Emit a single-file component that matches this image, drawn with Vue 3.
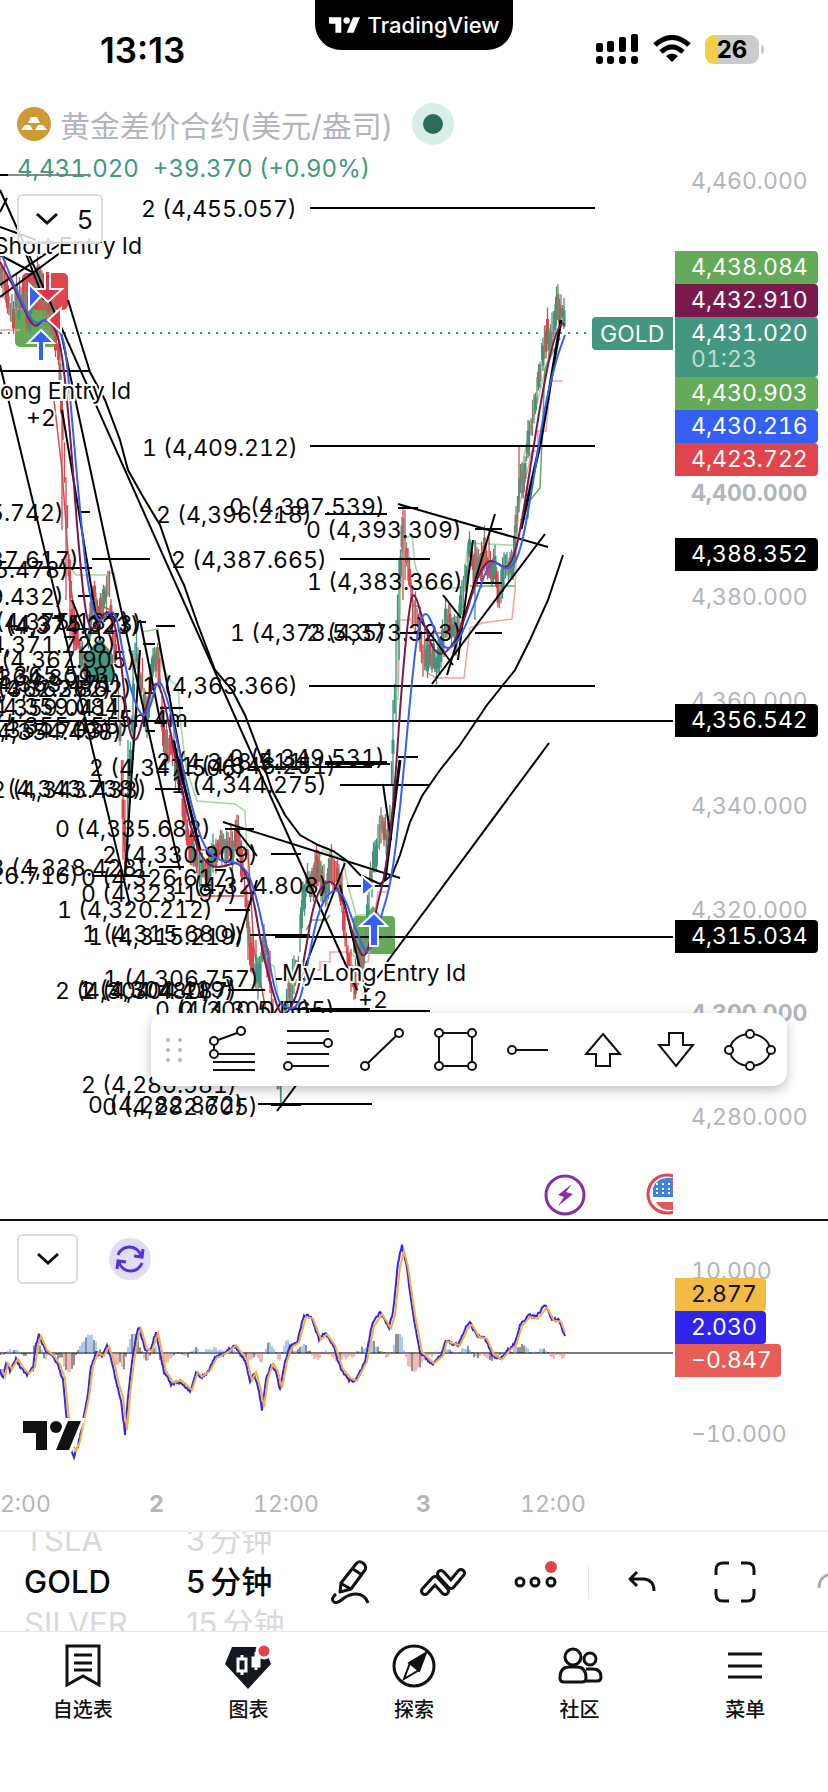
<script setup>
import { ref } from 'vue'

const seeded = (seed) => () => {
  seed = (seed * 1664525 + 1013904223) % 4294967296
  return seed / 4294967296
}
const sample = (pts, x) => {
  for (let i = 1; i < pts.length; i++) {
    if (x <= pts[i][0]) {
      const [x0, y0] = pts[i - 1]
      const [x1, y1] = pts[i]
      return y0 + ((y1 - y0) * (x - x0)) / (x1 - x0)
    }
  }
  return pts[pts.length - 1][1]
}
const line = (pts) => 'M' + pts.map((p) => p.join(' ')).join('L')
const smooth = (pts) => {
  let d = `M${pts[0][0]} ${pts[0][1]}`
  for (let i = 1; i < pts.length - 1; i++) {
    const mx = (pts[i][0] + pts[i + 1][0]) / 2
    const my = (pts[i][1] + pts[i + 1][1]) / 2
    d += `Q${pts[i][0]} ${pts[i][1]} ${mx} ${my}`
  }
  const last = pts[pts.length - 1]
  return d + `L${last[0]} ${last[1]}`
}

/* price series */
const price = [
  [0, 265], [8, 300], [14, 315], [22, 290], [30, 315], [38, 275], [46, 300], [52, 320], [58, 345], [62, 410], [66, 500],
  [70, 595], [74, 635], [80, 650], [86, 655], [91, 600], [94, 580], [99, 610], [106, 590], [110, 578], [114, 650],
  [118, 690], [122, 790], [126, 860], [130, 770], [136, 650], [142, 690], [147, 710], [152, 670], [157, 640], [162, 720],
  [170, 752], [180, 775], [188, 840], [200, 868], [212, 858], [226, 855], [236, 840], [243, 870], [250, 940], [256, 978],
  [264, 945], [272, 1000], [280, 1085], [287, 1000], [298, 975], [303, 900], [312, 880], [324, 878], [334, 875],
  [342, 905], [348, 955], [356, 985], [364, 950], [370, 870], [380, 835], [388, 840], [392, 770], [396, 660], [399, 590],
  [403, 520], [407, 560], [413, 600], [421, 645], [432, 665], [442, 650], [448, 615], [456, 625], [463, 590],
  [469, 550], [475, 575], [483, 545], [491, 570], [499, 585], [507, 560], [514, 550], [518, 490], [524, 470],
  [532, 425], [539, 380], [544, 345], [551, 340], [557, 315], [561, 310], [565, 322]
]
const rnd = seeded(17)
const candle = { red: '', teal: '', mix: '' }
const body = { red: '', teal: '', mix: '' }
let drift = 0
for (let x = 0; x <= 564; x += 1.5) {
  drift = drift * 0.6 + (rnd() - 0.5) * 18
  const y = sample(price, x) + drift
  const slope = sample(price, x + 3) - sample(price, x - 3)
  const r = rnd()
  const kind = r < 0.3 ? 'mix' : slope + (rnd() - 0.5) * 40 > 0 ? 'red' : 'teal'
  const up = 6 + rnd() * 18
  const dn = 6 + rnd() * 18
  candle[kind] += `M${x} ${(y - up).toFixed(1)}V${(y + dn).toFixed(1)}`
  if (rnd() > 0.45) body[kind] += `M${x} ${(y - up * 0.5).toFixed(1)}V${(y + dn * 0.7).toFixed(1)}`
}
candle.red += 'M62 400V530M66 480V600M70 560V640M123 760V860M125 800V880M248 900V960M256 940V990M403 506V600M405 510V580M519 447V500'
candle.teal += 'M128 740V850M133 650V760M281 1050V1108M393 700V800M396 620V720M399 560V660M475 540V620'
const candles = [
  { c: '#d9484c', w: candle.red, b: body.red },
  { c: '#3f957d', w: candle.teal, b: body.teal },
  { c: '#8f7c6c', w: candle.mix, b: body.mix }
]

const fast = smooth([
  [0, 262], [10, 280], [20, 300], [34, 330], [44, 318], [54, 325], [62, 350], [70, 430], [78, 540], [86, 620], [94, 632],
  [104, 612], [112, 612], [120, 650], [128, 730], [136, 745], [144, 715], [154, 680], [162, 690], [172, 740], [182, 790],
  [194, 840], [206, 865], [222, 868], [240, 860], [252, 890], [262, 950], [272, 990], [282, 1020], [296, 1000],
  [304, 960], [314, 900], [326, 880], [336, 884], [346, 910], [356, 945], [366, 962], [376, 910], [386, 870],
  [394, 800], [402, 680], [410, 600], [415, 592], [424, 625], [434, 652], [444, 655], [456, 640], [466, 615],
  [476, 580], [487, 560], [496, 562], [508, 570], [518, 545], [530, 470], [541, 400], [552, 345], [561, 322], [565, 325]
])
const slow = smooth([
  [0, 250], [8, 270], [16, 290], [28, 315], [36, 325], [48, 318], [60, 330], [66, 350], [72, 420], [80, 510], [88, 590],
  [98, 625], [108, 612], [116, 612], [124, 660], [132, 695], [142, 718], [150, 710], [158, 675], [168, 700], [178, 745],
  [190, 800], [204, 850], [222, 862], [240, 862], [252, 880], [264, 930], [276, 1000], [288, 1010], [300, 1005],
  [310, 950], [320, 905], [334, 888], [344, 895], [354, 925], [368, 960], [380, 920], [392, 880], [402, 790],
  [410, 700], [418, 625], [426, 610], [434, 628], [444, 650], [456, 645], [466, 625], [476, 600], [486, 570],
  [494, 560], [508, 572], [520, 555], [532, 490], [544, 410], [556, 360], [565, 335]
])
const trend = line([
  [68, 300], [80, 340], [90, 372], [105, 400], [120, 440], [128, 470], [142, 495], [160, 525], [172, 560], [184, 585],
  [198, 625], [215, 670], [232, 690], [245, 715], [262, 760], [272, 790], [285, 815], [300, 835], [318, 845],
  [333, 851], [346, 860], [360, 875], [380, 884], [392, 875], [400, 855], [410, 822], [422, 796], [440, 770], [460, 745],
  [487, 705], [515, 670], [530, 640], [548, 600], [563, 555]
])

const segments = [
  [310, 208, 595, 208], [0, 175, 8, 175], [0, 371, 90, 371], [310, 446, 595, 446], [78, 512, 90, 512], [92, 559, 150, 559],
  [0, 568, 92, 568], [78, 596, 92, 596], [137, 622, 146, 622], [156, 626, 175, 626], [143, 644, 155, 644],
  [0, 721, 673, 721], [309, 686, 595, 686], [325, 514, 387, 514], [398, 508, 418, 508], [475, 529, 502, 529],
  [340, 559, 430, 559], [475, 583, 502, 583], [475, 633, 502, 633], [400, 633, 430, 633], [398, 757, 418, 757],
  [325, 762, 387, 762], [325, 764, 390, 764], [250, 767, 372, 767], [340, 785, 430, 785], [155, 789, 183, 789],
  [160, 708, 183, 708], [146, 731, 155, 731], [225, 829, 254, 829], [271, 854, 301, 854], [347, 886, 390, 886],
  [92, 876, 150, 876], [159, 867, 184, 867], [225, 910, 250, 910], [250, 935, 310, 935], [275, 937, 673, 937],
  [228, 990, 265, 990], [276, 979, 330, 979], [310, 1011, 430, 1011], [290, 1009, 370, 1009], [258, 1104, 372, 1104],
  [271, 1105, 301, 1105],
  [0, 190, 357, 990], [0, 365, 130, 905], [60, 328, 108, 552], [108, 552, 180, 870], [387, 962, 549, 743], [363, 995, 372, 984],
  [377, 978, 383, 970], [398, 504, 548, 547], [432, 684, 545, 534], [495, 514, 447, 675], [223, 822, 400, 878],
  [235, 828, 257, 856], [443, 595, 461, 618], [418, 617, 453, 665], [125, 875, 140, 650], [345, 863, 300, 980],
  [340, 885, 368, 1002], [277, 1111, 300, 1080], [0, 227, 36, 240], [0, 285, 60, 244], [0, 297, 64, 250],
  [0, 212, 7, 198], [26, 254, 44, 300], [0, 255, 32, 272], [62, 410, 100, 640], [140, 620, 160, 720], [157, 630, 185, 780],
  [237, 945, 257, 880], [383, 784, 391, 840], [72, 600, 92, 650], [473, 540, 458, 660]
]
const bold = [[521, 529, 541, 440], [541, 440, 561, 320], [173, 740, 200, 850], [385, 880, 400, 760]]

const labels = [
  [141, 217, '2 (4,455.057)'], [142, 456, '1 (4,409.212)'], [-92, 521, '1 (4,395.742)'], [156, 523, '2 (4,396.218)'],
  [229, 515, '0 (4,397.539)'], [306, 538, '0 (4,393.309)'], [171, 568, '2 (4,387.665)'], [-77, 568, '0 (4,387.617)'],
  [-87, 578, '1 (4,385.478)'], [307, 590, '1 (4,383.366)'], [-92, 605, '0 (4,379.432)'], [-14, 632, '0 (4,375.323)'],
  [-16, 634, '1 (4,374.223)'], [-26, 630, '2 (4,375.187)'], [-40, 653, '1 (4,371.728)'], [230, 641, '1 (4,373.535)'],
  [306, 641, '2 (4,373.323)'], [-20, 668, '1 (4,367.905)'], [-38, 683, '0 (4,365.513)'], [-54, 686, '1 (4,364.809)'],
  [-24, 697, '2 (4,362.862)'], [-34, 692, '0 (4,363.471)'], [-44, 697, '1 (4,362.362)'], [142, 694, '1 (4,363.366)'],
  [-27, 715, '1 (4,359.084)'], [-38, 716, '2 (4,359.041)'], [-27, 734, '2 (4,355.455)'], [-34, 740, '1 (4,354.498)'],
  [-45, 738, '0 (4,354.703)'], [89, 776, '2 (4,347.506)'], [156, 770, '2 (4,348.511)'], [229, 766, '0 (4,349.531)'],
  [180, 774, '1 (4,346.251)'], [171, 793, '1 (4,344.275)'], [-14, 797, '1 (4,343.738)'], [-9, 798, '2 (4,343.433)'],
  [55, 837, '0 (4,335.682)'], [102, 863, '2 (4,330.909)'], [-10, 876, '3 (4,328.428)'], [-77, 884, '1 (4,326.716)'],
  [81, 886, '0 (4,326.617)'], [172, 894, '1 (4,324.808)'], [81, 902, '0 (4,323.197)'], [57, 918, '1 (4,320.212)'],
  [82, 942, '1 (4,315.680)'], [88, 945, '1 (4,315.219)'], [103, 987, '1 (4,306.757)'], [55, 999, '2 (4,304.480)'],
  [81, 999, '2 (4,304.287)'], [78, 998, '1 (4,304.419)'], [155, 1018, '0 (4,300.545)'], [179, 1018, '0 (4,300.565)'],
  [81, 1093, '2 (4,286.581)'], [88, 1113, '0 (4,282.872)'], [102, 1115, '0 (4,282.605)']
]
const ticks = [
  [189, '4,460.000'], [501, '4,400.000', true], [605, '4,380.000'], [709, '4,360.000'], [814, '4,340.000'],
  [918, '4,320.000'], [1021, '4,300.000', true], [1125, '4,280.000']
]
const tags = [
  [251, '#63ab58', '4,438.084'], [284, '#7a1a4c', '4,432.910'], [317, '#43967f', '4,431.020', '01:23'],
  [377, '#63ab58', '4,430.903'], [410, '#355ff6', '4,430.216'], [443, '#e0454c', '4,423.722'],
  [538, '#000', '4,388.352'], [704, '#000', '4,356.542'], [920, '#000', '4,315.034']
]

/* oscillator */
const macd = [
  [0, 1370], [3, 1378], [6, 1364], [10, 1370], [16, 1359], [21, 1368], [27, 1375], [33, 1368], [36, 1345], [39, 1335],
  [45, 1350], [52, 1356], [58, 1365], [63, 1380], [66, 1412], [70, 1448], [74, 1456], [78, 1446], [83, 1420], [87, 1400], [91, 1367],
  [96, 1353], [102, 1356], [107, 1346], [112, 1362], [117, 1386], [121, 1400], [125, 1434], [128, 1398], [132, 1362],
  [137, 1332], [139, 1327], [145, 1349], [150, 1351], [156, 1332], [160, 1352], [164, 1372], [171, 1384], [180, 1382],
  [190, 1392], [196, 1373], [200, 1378], [208, 1372], [215, 1358], [225, 1353], [234, 1345], [245, 1360], [250, 1382],
  [254, 1373], [259, 1392], [262, 1410], [266, 1380], [271, 1364], [276, 1372], [280, 1390], [285, 1362], [290, 1347],
  [297, 1342], [304, 1315], [311, 1317], [319, 1339], [325, 1333], [333, 1345], [341, 1370], [349, 1380], [355, 1382],
  [365, 1362], [372, 1325], [380, 1312], [389, 1327], [393, 1313], [398, 1262], [402, 1246], [406, 1262], [413, 1313],
  [420, 1352], [432, 1364], [441, 1356], [445, 1341], [458, 1345], [466, 1327], [470, 1323], [477, 1336], [485, 1338],
  [492, 1355], [500, 1360], [508, 1350], [514, 1345], [520, 1325], [528, 1315], [536, 1317], [545, 1305], [552, 1319],
  [559, 1320], [565, 1337]
]
const noise = seeded(5)
const main = []
const signal = []
const bars = { up: '', down: '', dark: '' }
for (let x = 0; x <= 565; x += 1) {
  main.push([x, +(sample(macd, x) + (noise() - 0.5) * 3).toFixed(1)])
  if (x > 1) signal.push([x, +(1352 + (sample(macd, x - 2) - 1352) * 0.95).toFixed(1)])
  if (x % 2 === 0) {
    const h = (sample(macd, x + 1) - sample(macd, Math.max(0, x - 7))) * 0.34 + (noise() - 0.5) * 5
    const k = noise() < 0.35 ? 'dark' : h < 0 ? 'up' : 'down'
    const y = 1353 + Math.max(-19, Math.min(19, h))
    bars[k] += `M${x} 1353V${y.toFixed(1)}`
  }
}
const oscTags = [
  [1278, 91, '#f3bb44', '2.877', '#111'], [1311, 91, '#2f25ef', '2.030', '#fff'], [1344, 106, '#e85e57', '−0.847', '#fff']
]
const times = [[-15, '12:00'], [149, '2', true], [253, '12:00'], [416, '3', true], [520, '12:00']]

const active = ref('chart')
const tabs = [
  { id: 'watch', name: '自选表' }, { id: 'chart', name: '图表' }, { id: 'explore', name: '探索' },
  { id: 'community', name: '社区' }, { id: 'menu', name: '菜单' }
]
</script>

<template>
  <div class="app">
    <header class="status">
      <time class="clock">13:13</time>
      <div class="island">
        <svg width="31" height="16" viewBox="0 0 58 29" fill="#fff"><path d="M0 0h23v29H12V12H0z" /><circle cx="33" cy="6" r="6" /><path d="M45 0h13L46 29H33z" /></svg>
        <span>TradingView</span>
      </div>
      <div class="signals">
        <svg width="43" height="30" viewBox="0 0 43 30">
          <rect x="0" y="9" width="7" height="9" rx="2" /><rect x="11" y="7" width="7" height="11" rx="2" />
          <rect x="23" y="3" width="7" height="15" rx="2" /><rect x="35" y="0" width="7" height="18" rx="2" />
          <rect x="0" y="22" width="7" height="8" rx="3" /><rect x="11" y="22" width="7" height="8" rx="3" />
          <rect x="23" y="22" width="7" height="8" rx="3" /><rect x="35" y="22" width="7" height="8" rx="3" />
        </svg>
        <svg width="38" height="28" viewBox="0 0 38 28" fill="none" stroke="#000" stroke-width="5">
          <path d="M2 10Q19-5 36 10M8 17Q19 7 30 17" /><path d="M19 27l-6-6q6-5 12 0z" fill="#000" stroke="none" />
        </svg>
        <div class="battery"><b>26</b></div>
      </div>
    </header>

    <section class="pane">
      <svg class="plot" viewBox="0 90 828 1129">
        <defs><clipPath id="plot-area"><rect x="0" y="90" width="673" height="1129" /></clipPath></defs>
        <g clip-path="url(#plot-area)">
          <path d="M0 333H592" stroke="#43967f" stroke-width="2" stroke-dasharray="2 6" />
          <path d="M8 175H90" stroke="#888" stroke-width="2" />
          <rect x="22" y="273" width="46" height="37" rx="5" fill="#e0454c" />
          <rect x="15" y="310" width="42" height="37" rx="5" fill="#63ab58" />
          <path d="M357 916h8l8-10 8 10h10q4 0 4 4v30q0 4-4 4h-34q-4 0-4-4v-30q0-4 4-4z" fill="#63ab58" />
          <g fill="none" stroke-width="1.5">
            <path stroke="#a5d6a0" d="M72 570l4 5h32v-2h6l4 20M142 632l16-3 4 38 5 8 3 5 8 6 3 40 5 40 6 20 5 15 38 3 10 7 3 60 8 40 8 50 10 5 8 60M303 890l20-40 20 10 5 25 8 30h20M398 700l4-160 10-5 3 30 6 18 2 5h40l5-45 40 2h8l2-40 6-50 20-80 10-40" />
            <path stroke="#63ab58" d="M306 930l6-10h14l4-5M470 586h45M520 520l8-2v-15l12-15 5-120 15-30" />
            <path stroke="#e0454c" d="M54 400l8 70 8 110 8 60 8 40M196 850h52l6 100 12 60M200 896h44M100 605l10 5" />
            <path stroke="#f2a0a4" d="M0 330h20M300 970h20v-8h10v-10h20l10 10h8l10-70h10l5-25M398 690v-70h12v-2l8 20 10 35 8 5h28l6-50 12-5 30-4 3-28 3-80 14-60h6v-20h8l5-50h12" />
            <path stroke="#e0454c" d="M412 605l8 2v27M434 633h24l6-20" />
          </g>
          <g v-for="k in candles" :key="k.c" :stroke="k.c" fill="none">
            <path :d="k.w" stroke-width="1.3" />
            <path :d="k.b" stroke-width="3" />
          </g>
          <path d="M85 682V655l15-17 13 17v27z" fill="#43967f" />
          <g stroke="#000" stroke-width="2">
            <line v-for="(s, i) in segments" :key="i" :x1="s[0]" :y1="s[1]" :x2="s[2]" :y2="s[3]" />
            <path :d="trend" fill="none" />
          </g>
          <g stroke="#000" stroke-width="3">
            <line v-for="(s, i) in bold" :key="i" :x1="s[0]" :y1="s[1]" :x2="s[2]" :y2="s[3]" />
          </g>
          <g class="level">
            <text v-for="l in labels" :key="l[2] + l[0]" :x="l[0]" :y="l[1]">{{ l[2] }}</text>
            <text x="188" y="727" text-anchor="end">5h 4m</text>
          </g>
          <path :d="fast" fill="none" stroke="#7a1a4c" stroke-width="2" />
          <path :d="slow" fill="none" stroke="#355ff6" stroke-width="2" />
          <g stroke="#fff" stroke-width="2">
            <path d="M29 284l12 12-12 13z" fill="#355ff6" />
            <path d="M45 271h5v18h12l-14 13-14-13h11z" fill="#e0344c" />
            <path d="M61 308v24l-13-12z" fill="#e0344c" />
            <path d="M38 361v-18H28l13-13 13 13H44v18z" fill="#355ff6" />
            <path d="M370 946v-20h-10l14-13 13 13h-9v20z" fill="#355ff6" />
            <path d="M362 876l12 10-12 10z" fill="#355ff6" />
          </g>
          <g class="level halo">
            <text x="142" y="254" text-anchor="end">My Short Entry Id</text>
            <text x="131" y="399" text-anchor="end">My Long Entry Id</text>
            <text x="26" y="426">+2</text>
            <text x="282" y="981">My Long Entry Id</text>
            <text x="358" y="1008">+2</text>
          </g>
          <path d="M596 317h77v33h-77q-4 0-4-4v-25q0-4 4-4z" fill="#43967f" />
          <text class="level on name" x="600" y="342">GOLD</text>
          <g>
            <circle cx="565" cy="1195" r="19" fill="#fff" stroke="#8430a4" stroke-width="3" />
            <path d="M572 1184l-14 11 6 2-6 9 15-12-7-2z" fill="#8430a4" />
            <circle cx="667" cy="1194" r="19" fill="#fff" stroke="#e0454c" stroke-width="3" />
            <path d="M653 1197V1188q4-10 14-10h8v19z" fill="#3f82dc" />
            <path d="M656 1202h20v8h-8q-8-1-12-8zM671 1180h4v5h-4zM671 1190h4v4h-4z" fill="#e05a58" />
            <path d="M656 1184h16M656 1189h16M656 1193h16" stroke="#fff" stroke-width="2" stroke-dasharray="2 4" />
          </g>
        </g>
        <g class="axis">
          <text v-for="t in ticks" :key="t[0]" x="691" :y="t[0]" :class="{ strong: t[2] }">{{ t[1] }}</text>
        </g>
        <g v-for="t in tags" :key="t[0]">
          <path :d="`M675 ${t[0]}h139q4 0 4 4v${t[3] ? 52 : 25}q0 4-4 4h-139z`" :fill="t[1]" />
          <text class="figure on" x="691" :y="t[0] + 24">{{ t[2] }}</text>
          <text v-if="t[3]" class="figure dim" x="691" :y="t[0] + 50">{{ t[3] }}</text>
        </g>
      </svg>

      <div class="legend">
        <h1>
          <svg width="34" height="34" viewBox="0 0 34 34"><circle cx="17" cy="17" r="17" fill="#cd9a34" /><g fill="#fff"><path d="M14 10h6l3 6H11zM8 18h5l3 5H4zM21 18h5l4 5H18z" /></g></svg>
          <span>黄金差价合约(美元/盎司)</span>
          <i class="market"></i>
        </h1>
        <p><span>4,431.020</span><span>+39.370 (+0.90%)</span></p>
        <button class="fold" aria-label="指标">
          <svg width="24" height="14" viewBox="0 0 24 14" fill="none" stroke="#111" stroke-width="3"><path d="M2 2l10 9 10-9" /></svg>5
        </button>
      </div>

      <div class="tools" role="toolbar">
        <svg class="grip" width="18" height="26" viewBox="0 0 18 26" fill="#b5b5b5"><circle v-for="n in 6" :key="n" :cx="n % 2 ? 3 : 15" :cy="3 + Math.floor((n - 1) / 2) * 10" r="2" /></svg>
        <button aria-label="通道"><svg viewBox="0 0 48 48"><path d="M8 14l19-7M4 19v5M8 28h37M3 36h42M3 44h42" /><circle cx="31" cy="5" r="4" /><circle cx="4" cy="15" r="4" /><circle cx="4" cy="28" r="4" /></svg></button>
        <button aria-label="斐波那契"><svg viewBox="0 0 48 48"><path d="M3 5h42M3 17h37M3 28h42M7 40h38" /><circle cx="44" cy="17" r="4" /><circle cx="4" cy="40" r="4" /></svg></button>
        <button aria-label="趋势线"><svg viewBox="0 0 48 48"><path d="M10 37L38 10" /><circle cx="7" cy="40" r="4" /><circle cx="41" cy="7" r="4" /></svg></button>
        <button aria-label="矩形"><svg viewBox="0 0 48 48"><path d="M8 7h33v33H8z" /><circle cx="8" cy="7" r="4" /><circle cx="41" cy="7" r="4" /><circle cx="8" cy="40" r="4" /><circle cx="41" cy="40" r="4" /></svg></button>
        <button aria-label="水平射线"><svg viewBox="0 0 48 48"><path d="M11 24h32" /><circle cx="7" cy="24" r="4" /></svg></button>
        <button aria-label="向上箭头"><svg viewBox="0 0 48 48"><path d="M24 8l17 20H31v12H17V28H7z" /></svg></button>
        <button aria-label="向下箭头"><svg viewBox="0 0 48 48"><path d="M24 40l17-21H31V7H17v12H7z" /></svg></button>
        <button aria-label="椭圆"><svg viewBox="0 0 48 48"><ellipse cx="24" cy="24" rx="20" ry="16" /><circle cx="3" cy="24" r="4" /><circle cx="45" cy="24" r="4" /><circle cx="24" cy="8" r="4" /><circle cx="24" cy="40" r="4" /></svg></button>
      </div>
    </section>

    <section class="pane lower">
      <svg class="plot" viewBox="0 1221 828 309">
        <path d="M0 1353H673" stroke="#777" stroke-width="2" />
        <path :d="bars.up" stroke="#5b93e8" stroke-width="1" />
        <path :d="bars.down" stroke="#e8706c" stroke-width="1" />
        <path :d="bars.dark" stroke="#222" stroke-width="1" />
        <path :d="line(main)" fill="none" stroke="#2f25ef" stroke-width="2" />
        <path :d="line(signal)" fill="none" stroke="#f3b13c" stroke-width="2" />
        <g stroke="#fff" stroke-width="6" paint-order="stroke" fill="#111">
          <path d="M23 1421h24v29H36v-17H23z" /><circle cx="56" cy="1427" r="6" /><path d="M68 1421h13l-12 29H56z" />
        </g>
        <g class="axis">
          <text x="691" y="1279">10.000</text>
          <text x="691" y="1442">−10.000</text>
          <text v-for="t in times" :key="t[0]" :x="t[0]" y="1512" :class="{ strong: t[2] }">{{ t[1] }}</text>
        </g>
        <g v-for="t in oscTags" :key="t[0]">
          <path :d="`M675 ${t[0]}h${t[1] - 4}q4 0 4 4v25q0 4-4 4h-${t[1] - 4}z`" :fill="t[2]" />
          <text class="figure" x="691" :y="t[0] + 24" :style="{ fill: t[4] }">{{ t[3] }}</text>
        </g>
      </svg>
      <div class="lower-legend">
        <button class="fold square" aria-label="展开">
          <svg width="24" height="14" viewBox="0 0 24 14" fill="none" stroke="#111" stroke-width="3"><path d="M2 2l10 9 10-9" /></svg>
        </button>
        <button class="sync" aria-label="刷新">
          <svg width="32" height="32" viewBox="0 0 32 32" fill="none" stroke="#5a2fe0" stroke-width="3"><path d="M4 12a12 12 0 0 1 23 1M28 20a12 12 0 0 1-23-1M29 6l-1 8-8-1M3 26l1-8 8 1" /></svg>
        </button>
      </div>
    </section>

    <div class="controls">
      <div class="wheel symbol"><span>TSLA</span><button>GOLD</button><span>SILVER</span></div>
      <div class="wheel interval"><span>3<i>分钟</i></span><button>5<i>分钟</i></button><span>15<i>分钟</i></span></div>
      <button class="act" aria-label="绘图">
        <svg width="40" height="44" viewBox="0 0 40 44"><path d="M11 23L26 4q3-4 7-1t2 7L21 29l-11 3zM12 24l9 5M23 9l9 6" /><path d="M6 34q-6 5-2 8 3 2 10-4 9-6 17-3 5 2 7 8" /></svg>
      </button>
      <button class="act" aria-label="指标">
        <svg width="46" height="34" viewBox="0 0 46 34" stroke-linecap="round">
          <path d="M21 9l10 11L41 8" class="outer" /><path d="M21 9l10 11L41 8" class="inner" />
          <path d="M5 26l10-11 10 11" class="outer" /><path d="M5 26l10-11 10 11" class="inner" />
        </svg>
      </button>
      <button class="act" aria-label="更多">
        <svg width="46" height="44" viewBox="0 0 46 44"><circle cx="7" cy="22" r="4" /><circle cx="22" cy="22" r="4" /><circle cx="38" cy="22" r="4" /><circle cx="38" cy="7" r="6" fill="#e0454c" stroke="none" /></svg>
      </button>
      <i class="rule"></i>
      <button class="act" aria-label="撤销">
        <svg width="30" height="24" viewBox="0 0 30 24"><path d="M10 2L3 9l7 7M4 9h13q10 1 10 12" /></svg>
      </button>
      <button class="act" aria-label="全屏">
        <svg width="42" height="42" viewBox="0 0 42 42"><path d="M2 14V9q0-7 7-7h6M27 2h6q7 0 7 7v5M40 28v5q0 7-7 7h-6M15 40H9q-7 0-7-7v-5" /></svg>
      </button>
      <button class="act" aria-label="快照">
        <svg width="22" height="24" viewBox="0 0 22 24" class="faint"><path d="M2 18Q2 6 14 4" /></svg>
      </button>
    </div>

    <nav class="tabs">
      <a v-for="t in tabs" :key="t.id" href="#" :aria-current="active === t.id ? 'page' : null" @click.prevent="active = t.id">
        <svg viewBox="0 0 48 48" width="48" height="48">
          <g v-if="t.id === 'watch'"><path d="M8 4h32v39l-16-9-16 9zM15 13h18M15 21h18M15 28h18" /></g>
          <g v-else-if="t.id === 'chart'"><path d="M8 5h32l7 17-23 25L1 22z" fill="#131722" stroke="none" /><path d="M18 13v20M32 10v18" stroke="#fff" /><path d="M14 17h8v12h-8z" fill="#131722" stroke="#fff" /><path d="M29 16h6v8h-6z" fill="#fff" stroke="#fff" /><circle cx="40" cy="9" r="7" fill="#e0454c" stroke="#fff" stroke-width="3" /></g>
          <g v-else-if="t.id === 'explore'"><circle cx="24" cy="24" r="20" /><path d="M35 12l-6 16-15 9 6-16z" stroke-width="2" /><path d="M35 12l-6 16-9-7z" fill="#111" /></g>
          <g v-else-if="t.id === 'community'"><circle cx="17" cy="15" r="8" /><circle cx="34" cy="17" r="6" /><path d="M4 36q0-11 9-11h8q9 0 9 11 0 4-4 4H8q-4 0-4-4zM30 27h7q8 0 8 8 0 4-4 4H29" /></g>
          <g v-else><path d="M7 12h34M7 24h34M7 35h34" /></g>
        </svg>
        <span>{{ t.name }}</span>
      </a>
    </nav>
  </div>
</template>

<style>
body { margin: 0; background: #fff; }
</style>

<style scoped>
.app { font-family: Inter, "Noto Sans CJK SC", sans-serif; color: #111; background: #fff; overflow: hidden; }
button { font: inherit; color: inherit; border: 0; background: none; padding: 0; margin: 0; }
.status { height: 90px; display: grid; grid-template-columns: 1fr auto 1fr; align-items: start; }
.clock { padding: 30px 0 0 100px; font-size: 35px; line-height: 40px; font-weight: 600; color: #000; }
.island { display: flex; align-items: center; gap: 8px; height: 50px; padding: 0 14px; box-sizing: border-box; background: #000; color: #fff; border-radius: 0 0 26px 26px; font-size: 22px; font-weight: 500; }
.signals { display: flex; align-items: center; gap: 14px; justify-content: flex-end; padding: 34px 69px 0 0; }
.battery { position: relative; width: 54px; height: 29px; border-radius: 9px; background: linear-gradient(90deg, #f6cd46 25%, #cbcbcb 25%); text-align: center; font-size: 24px; line-height: 29px; color: #000; }
.battery::after { content: ""; position: absolute; right: -5px; top: 10px; width: 3px; height: 9px; border-radius: 0 4px 4px 0; background: #cbcbcb; }
.battery b { font-weight: 700; }
.pane { position: relative; }
.lower { border-top: 2px solid #111; }
.plot { display: block; width: 100%; height: auto; font-family: Inter, sans-serif; font-size: 23px; font-variant-numeric: tabular-nums; }
.level { fill: #0a0a0a; }
.halo { stroke: #fff; stroke-width: 4px; paint-order: stroke; }
.on { fill: #fff; }
.dim { fill: #b9ddd2; }
.axis { fill: #b2b5bb; }
.strong { font-weight: 700; }
.legend { position: absolute; left: 17px; top: 13px; }
h1 { display: flex; align-items: center; gap: 9px; height: 42px; margin: 0; font-size: 30px; font-weight: 400; color: #b2b5be; }
.market { width: 20px; height: 20px; margin-left: 10px; border: 11px solid #d9ede9; border-radius: 50%; background: #2d6b58; }
.legend p { display: flex; gap: 14px; margin: 8px 0 9px; font-size: 24px; line-height: 32px; color: #43967f; font-variant-numeric: tabular-nums; }
.fold { display: flex; align-items: center; justify-content: center; gap: 18px; width: 86px; height: 50px; padding-left: 8px; box-sizing: border-box; border: 2px solid #dcdcdc; border-radius: 6px; background: rgba(255, 255, 255, 0.82); font-size: 26px; }
.square { width: 61px; padding: 0; }
.tools { position: absolute; left: 18.2%; right: 5%; bottom: 133px; height: 73px; display: flex; align-items: center; border-radius: 14px; background: #fff; box-shadow: 0 4px 12px rgba(0, 0, 0, 0.25); }
.grip { margin: 0 15px 0 14px; }
.tools button { flex: 1; display: flex; justify-content: center; }
.tools button svg { width: 48px; height: 48px; overflow: visible; fill: none; stroke: #111; stroke-width: 2; }
.tools circle { fill: #fff; }
.tools .grip circle { fill: #b5b5b5; }
.lower-legend { position: absolute; left: 17px; top: 13px; display: flex; align-items: center; gap: 31px; }
.sync { width: 42px; height: 42px; display: grid; place-items: center; border-radius: 50%; background: #e2dcf5; }
.controls { display: flex; align-items: center; height: 99px; overflow: hidden; border-top: 2px solid #f0f0f2; border-bottom: 1px solid #e8e8ea; }
.wheel { flex: none; display: flex; flex-direction: column; align-items: flex-start; line-height: 42px; font-size: 31px; white-space: nowrap; color: #d9d9db; }
.wheel button { font-weight: 500; color: #0a0a0a; }
.wheel i { font-style: normal; margin-left: 5px; }
.symbol { width: 186px; padding-left: 24px; box-sizing: border-box; }
.interval { width: 114px; margin-right: auto; }
.act { flex: none; width: 93px; height: 60px; display: grid; place-items: center; }
.act svg { fill: none; stroke: #111; stroke-width: 3; stroke-linejoin: round; }
.act .outer { stroke-width: 10; }
.act .inner { stroke: #fff; stroke-width: 4; }
.act svg.faint { stroke: #aaa; }
.act:last-child { margin-right: -46px; }
.rule { flex: none; width: 1px; height: 34px; margin: 0 6px; background: #e8e8ea; }
.tabs { display: grid; grid-template-columns: repeat(5, 1fr); padding: 10px 0 62px; }
.tabs a { display: flex; flex-direction: column; align-items: center; gap: 6px; height: 88px; color: #111; text-decoration: none; font-size: 20px; line-height: 28px; font-weight: 500; }
.tabs svg { fill: none; stroke: #111; stroke-width: 3; }
</style>
